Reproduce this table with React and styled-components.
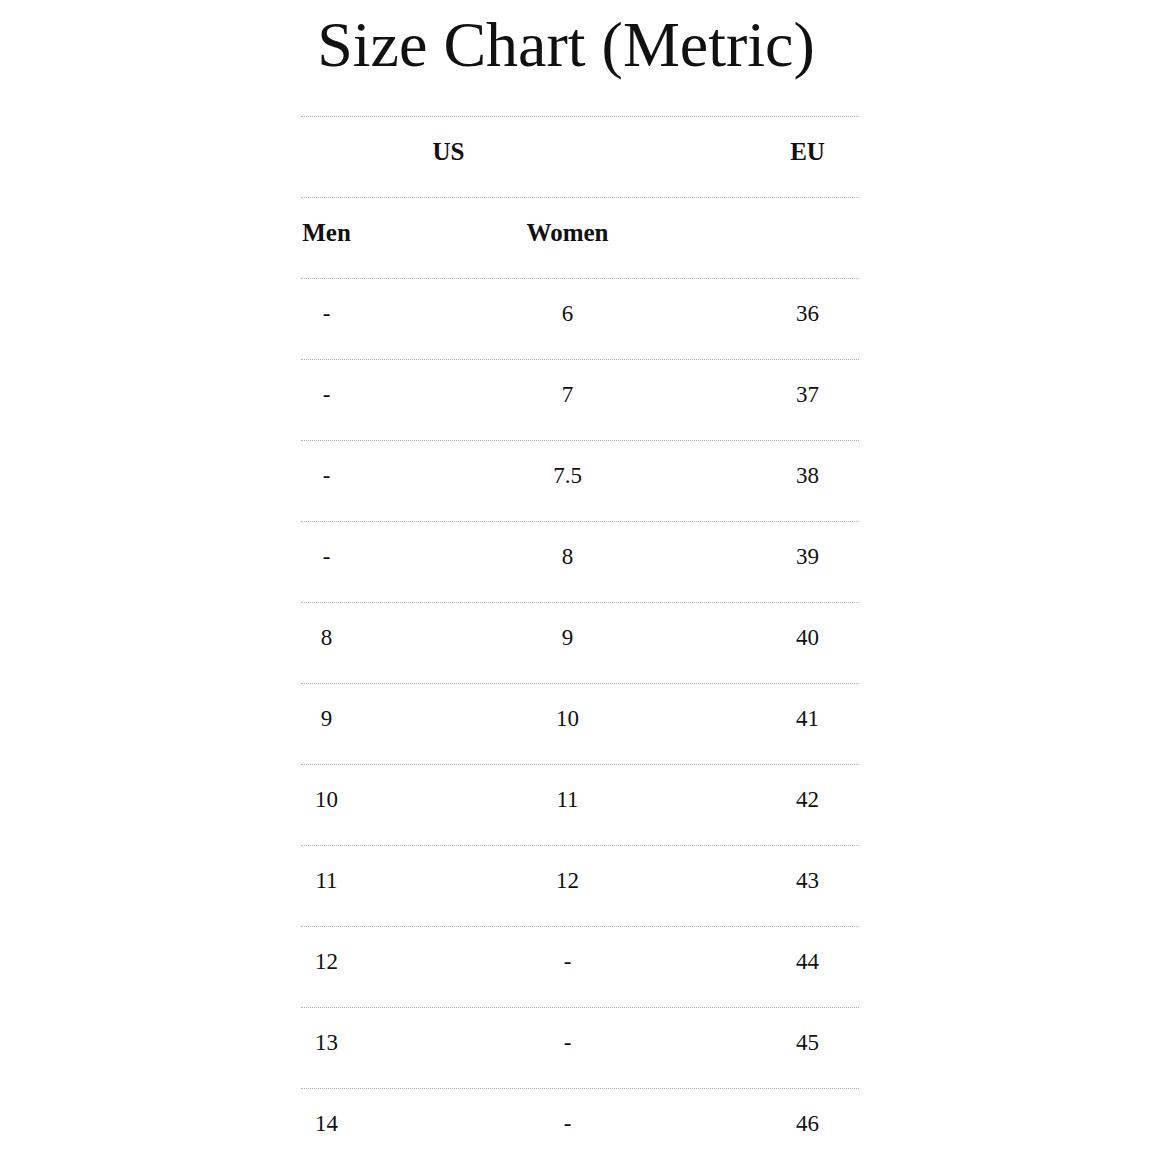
import React from 'react';
import styled, { createGlobalStyle } from 'styled-components';

const GlobalStyle = createGlobalStyle`
  body {
    margin: 0;
    background: #fff;
    font-family: "Liberation Serif", "Times New Roman", serif;
    color: #111;
  }
`;

const Page = styled.div`
  width: 558px;
  margin: 0 auto;
`;

const Title = styled.h1`
  margin: 0 0 39px;
  padding: 13px 27px 0 0;
  font-size: 64px;
  line-height: 64px;
  font-weight: normal;
  text-align: center;
`;

const Row = styled.div`
  display: grid;
  grid-template-columns: ${(p) => p.$cols};
  align-items: center;
  box-sizing: border-box;
  height: 81px;
  padding-bottom: 10px;
  border-top: 1px dotted #b4b4b4;
`;

const Head = styled.div`
  font-size: 25px;
  font-weight: bold;
  text-align: center;
`;

const Cell = styled.div`
  font-size: 23px;
  text-align: center;
`;

const BODY_COLS = '52px 430px 50px 26px';

const sizes = [
  ['-', '6', '36'],
  ['-', '7', '37'],
  ['-', '7.5', '38'],
  ['-', '8', '39'],
  ['8', '9', '40'],
  ['9', '10', '41'],
  ['10', '11', '42'],
  ['11', '12', '43'],
  ['12', '-', '44'],
  ['13', '-', '45'],
  ['14', '-', '46'],
];

const App = () => {
  return (
    <Page>
      <GlobalStyle />
      <Title>Size Chart (Metric)</Title>

      <Row $cols="296px 160px 102px">
        <Head>US</Head>
        <div />
        <Head>EU</Head>
      </Row>

      <Row $cols={BODY_COLS}>
        <Head>Men</Head>
        <Head>Women</Head>
      </Row>

      {sizes.map((s, i) => (
        <Row key={i} $cols={BODY_COLS}>
          <Cell>{s[0]}</Cell>
          <Cell>{s[1]}</Cell>
          <Cell>{s[2]}</Cell>
        </Row>
      ))}
    </Page>
  );
};

export default App;
